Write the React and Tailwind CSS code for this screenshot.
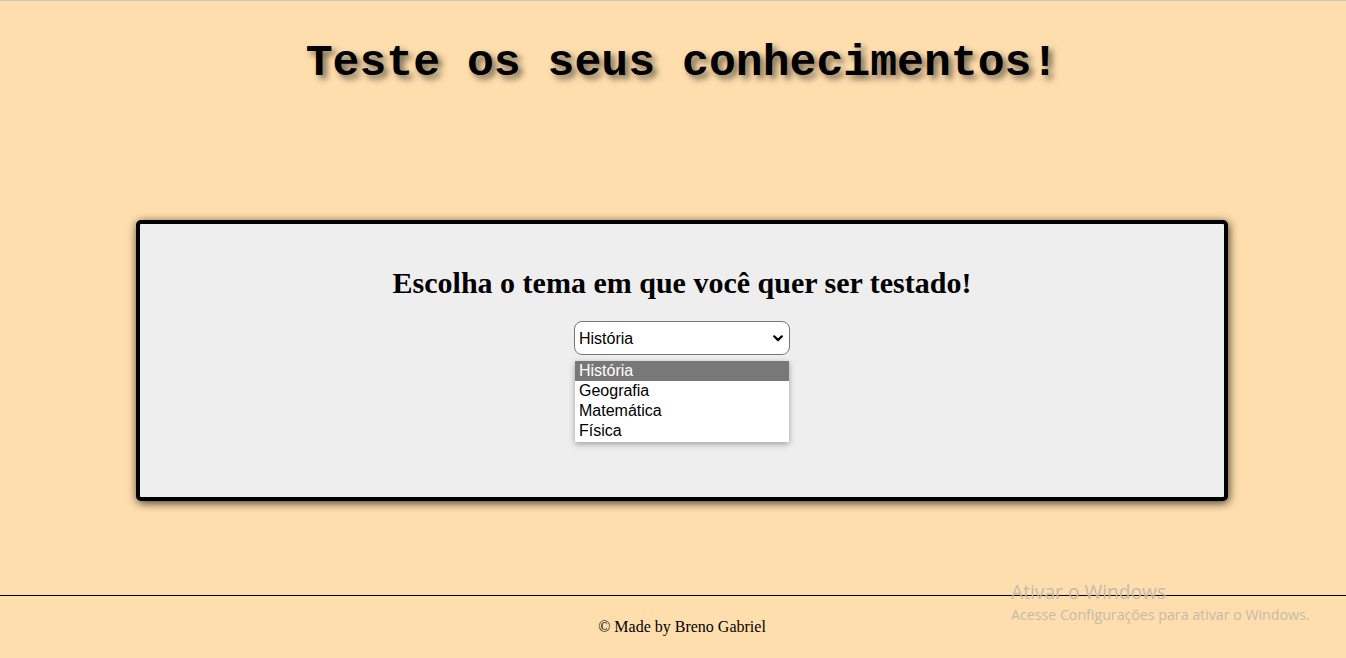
import { useState } from "react";

const temas = ["História", "Geografia", "Matemática", "Física"];

export default function App() {
  const [tema, setTema] = useState("História");

  return (
    <div className="relative min-h-[658px] h-[658px] bg-[#ffdead] border-t border-[#c6c6c6] flex flex-col overflow-hidden">
      {/* Título */}
      <header className="h-[219px] pl-[18px] pt-[36px] flex justify-center">
        <h1 className="font-['Liberation_Mono','Courier_New',monospace] font-bold text-[44.8px] leading-[52px] text-black [text-shadow:4px_4px_6px_rgba(0,0,0,0.55)]">
          Teste os seus conhecimentos!
        </h1>
      </header>

      {/* Caixa principal */}
      <main className="pl-[18px] flex justify-center">
        <section className="w-[1092px] h-[281px] bg-[#eeeeee] border-[4px] border-black rounded-[5px] shadow-[1px_2px_10px_rgba(0,0,0,0.75)] flex flex-col items-center pt-[40px]">
          <h2 className="font-['Liberation_Serif','Times_New_Roman',serif] font-bold text-[30px] leading-[38px] text-black">
            Escolha o tema em que você quer ser testado!
          </h2>

          <div className="relative mt-[19px]">
            <div className="w-[216px] h-[34px] bg-white border border-[#767676] rounded-[8px] flex items-center justify-between pl-[4px] pr-[6px] pt-[1px] font-['Liberation_Sans',Arial,sans-serif] text-[16px] text-black">
              <span>{tema}</span>
              <svg width="10" height="7" viewBox="0 0 10 7" fill="none">
                <path d="M1.2 1.3 5 5.1 8.8 1.3" stroke="black" strokeWidth="2.2" strokeLinecap="round" strokeLinejoin="round" />
              </svg>
            </div>

            {/* Lista aberta */}
            <ul className="absolute left-[1px] top-[40px] w-[214px] bg-white shadow-[0_2px_6px_rgba(0,0,0,0.35)] pb-[1px] font-['Liberation_Sans',Arial,sans-serif] text-[16px] z-10">
              {temas.map((t) => (
                <li
                  key={t}
                  onClick={() => setTema(t)}
                  className={`h-[20px] leading-[19px] px-[4px] ${t === tema ? "bg-[#787878] text-white" : "text-black"}`}
                >
                  {t}
                </li>
              ))}
            </ul>
          </div>
        </section>
      </main>

      <div className="flex-1" />

      {/* Rodapé */}
      <footer className="h-[63px] border-t border-black pl-[18px] flex justify-center pt-[22px]">
        <p className="font-['Liberation_Serif','Times_New_Roman',serif] text-[16px] leading-[18px] text-black">
          © Made by Breno Gabriel
        </p>
      </footer>

      {/* Marca d'água */}
      <div className="absolute left-[1011px] top-[578px] font-['Open_Sans','Noto_Sans',sans-serif] text-[#c4bbab] pointer-events-none">
        <p className="text-[19.2px] leading-[26px]">Ativar o Windows</p>
        <p className="text-[14.2px] leading-[20px]">Acesse Configurações para ativar o Windows.</p>
      </div>
    </div>
  );
}
